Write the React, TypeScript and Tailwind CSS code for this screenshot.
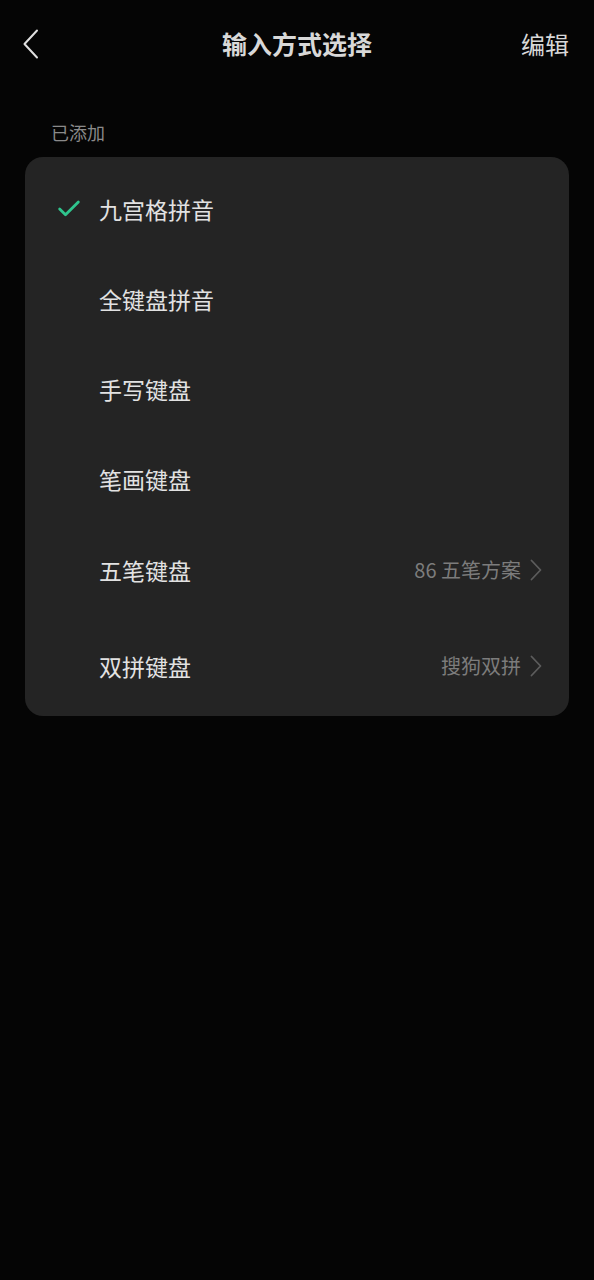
import { Check } from "lucide-react";

const FONT = { fontFamily: '"Noto Sans CJK SC", "Noto Sans", sans-serif' };

type Row = { label: string; value?: string; checked?: boolean; h: string };

const ROWS: Row[] = [
  { label: "九宫格拼音", checked: true, h: "h-[90px]" },
  { label: "全键盘拼音", h: "h-[90px]" },
  { label: "手写键盘", h: "h-[90px]" },
  { label: "笔画键盘", h: "h-[90px]" },
  { label: "五笔键盘", value: "86 五笔方案", h: "h-[92px]" },
  { label: "双拼键盘", value: "搜狗双拼", h: "h-[100px]" },
];

export default function App() {
  return (
    <div className="min-h-[1280px] w-full bg-[#050505] text-[#e2e2e2]" style={FONT}>
      <header className="relative flex h-[88px] items-center justify-between pl-[22px] pr-[25px]">
        <svg width="18" height="30" viewBox="0 0 18 30" fill="none" className="text-[#e0e0e0]">
          <polyline points="15,1.5 2.5,15 15,28.5" stroke="currentColor" strokeWidth="2" strokeLinecap="round" strokeLinejoin="round" />
        </svg>
        <h1 className="absolute left-1/2 -translate-x-1/2 text-[25px] font-bold text-[#d8d8d8]">
          输入方式选择
        </h1>
        <span className="text-[24px] text-[#d8d8d8]">编辑</span>
      </header>

      <p className="px-[51px] pt-[31px] pb-[12px] text-[18px] leading-[26px] text-[#8a8a8a]">已添加</p>

      <div className="mx-[25px] rounded-[18px] bg-[#242424] pt-[7px]">
        {ROWS.map((r) => (
          <div key={r.label} className={`flex items-center pl-[30px] pr-[27px] ${r.h}`}>
            <div className="w-[44px]">
              {r.checked && <Check className="h-[28px] w-[28px] text-[#2fc48d]" strokeWidth={2.4} />}
            </div>
            <span className="flex-1 text-[23px]">{r.label}</span>
            {r.value && (
              <span className="flex items-center gap-[9px] text-[20px] text-[#7c7c7c]">
                {r.value}
                <svg width="12" height="22" viewBox="0 0 12 22" fill="none" className="text-[#5c5c5c]">
                  <polyline points="1.5,1.5 10.5,11 1.5,20.5" stroke="currentColor" strokeWidth="1.8" strokeLinecap="round" strokeLinejoin="round" />
                </svg>
              </span>
            )}
          </div>
        ))}
      </div>
    </div>
  );
}
